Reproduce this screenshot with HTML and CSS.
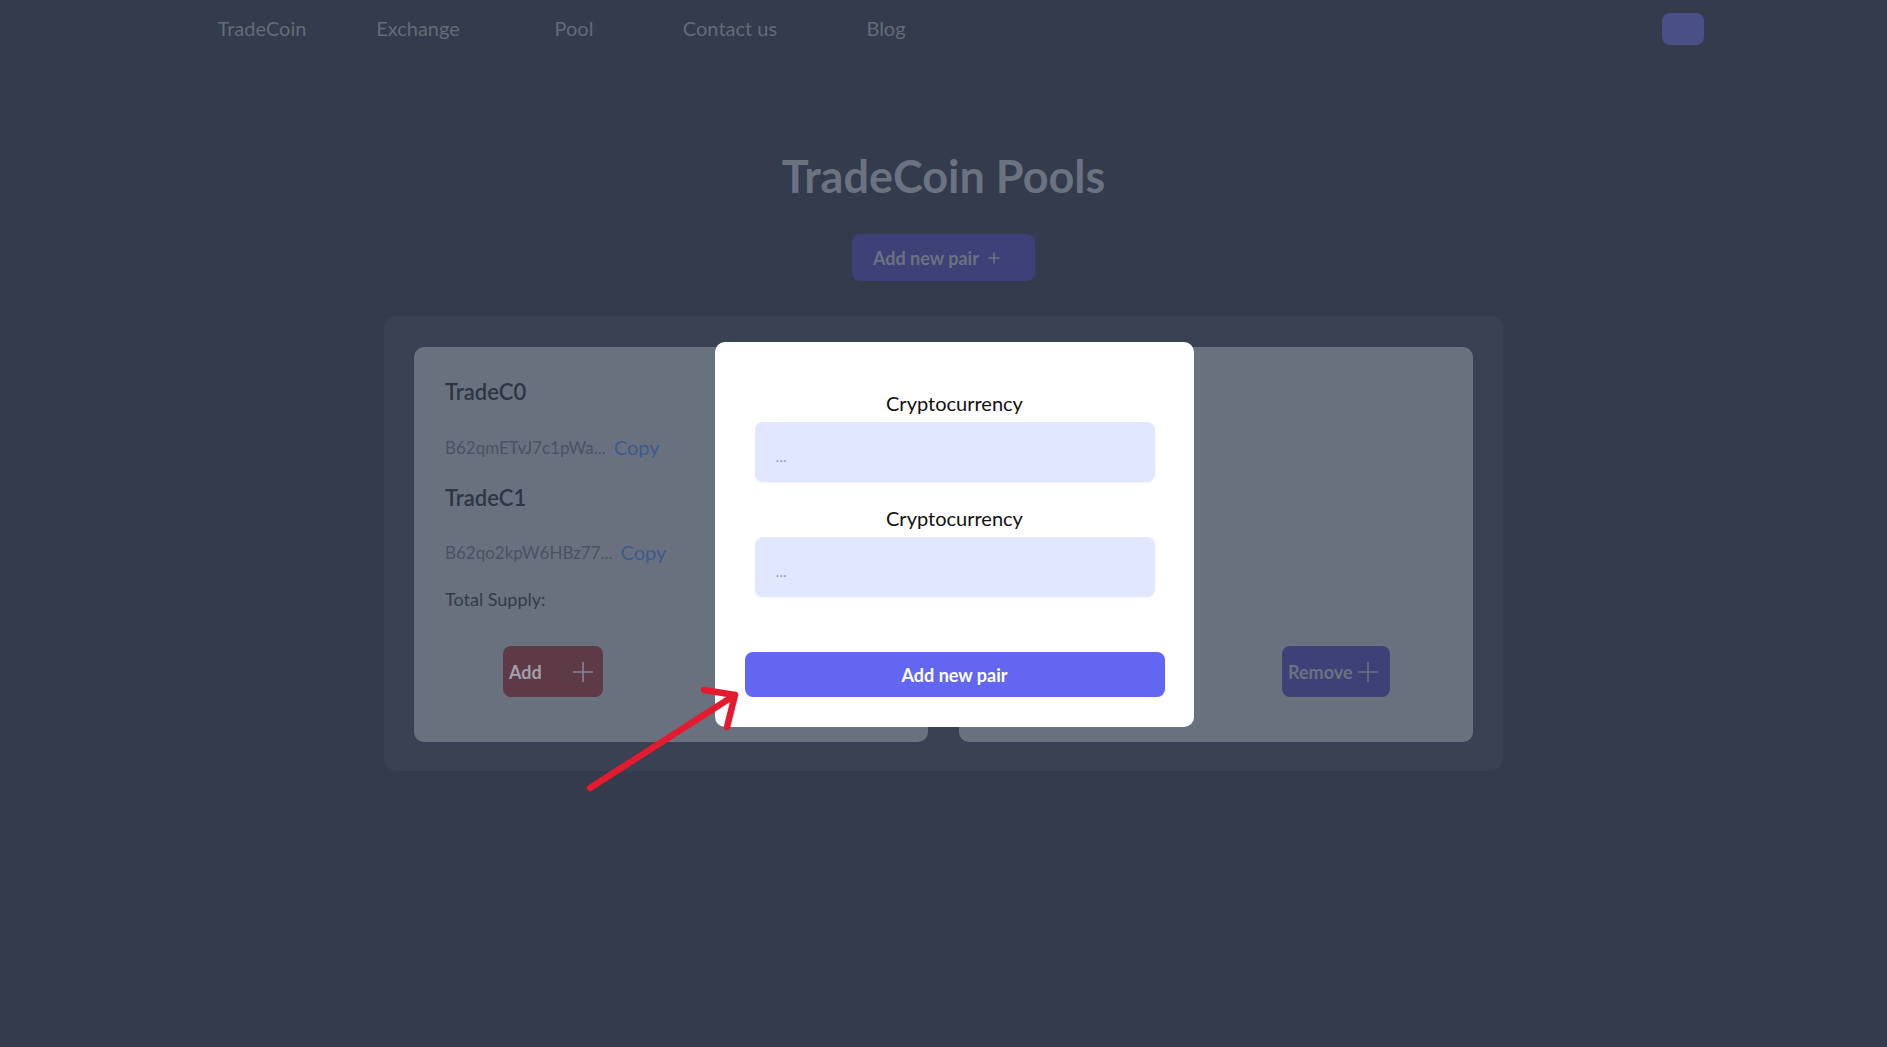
FILE: index.html
```html
<!DOCTYPE html>
<html lang="en">
<head>
<meta charset="utf-8">
<title>TradeCoin Pools</title>
<link rel="stylesheet" href="styles.css">
</head>
<body>
<header class="nav">
  <nav class="nav-links">
    <a class="nav-link">TradeCoin</a>
    <a class="nav-link">Exchange</a>
    <a class="nav-link">Pool</a>
    <a class="nav-link">Contact us</a>
    <a class="nav-link">Blog</a>
  </nav>
  <button class="nav-btn" aria-label="Connect"></button>
</header>

<main class="main">
  <h1 class="title">TradeCoin Pools</h1>
  <button class="add-pair-btn">Add new pair
    <svg class="plus-small" viewBox="0 0 12 12" width="12" height="12"><path d="M6 0.5V11.5M0.5 6H11.5" stroke="currentColor" stroke-width="1.6" fill="none"/></svg>
  </button>

  <section class="pools">
    <article class="card">
      <h2 class="coin">TradeC0</h2>
      <div class="addr-row addr-first"><span class="addr">B62qmETvJ7c1pWa...</span><a class="copy">Copy</a></div>
      <h2 class="coin coin-second">TradeC1</h2>
      <div class="addr-row addr-second"><span class="addr">B62qo2kpW6HBz77...</span><a class="copy">Copy</a></div>
      <p class="supply">Total Supply:</p>
      <div class="btn-row">
        <button class="btn btn-add">Add
          <svg class="plus" viewBox="0 0 22 22" width="22" height="22"><path d="M11 1V21M1 11H21" stroke="currentColor" stroke-width="1.6" fill="none"/></svg>
        </button>
        <button class="btn btn-remove">Remove
          <svg class="plus" viewBox="0 0 22 22" width="22" height="22"><path d="M11 1V21M1 11H21" stroke="currentColor" stroke-width="1.6" fill="none"/></svg>
        </button>
      </div>
    </article>
    <article class="card">
      <div class="btn-row">
        <button class="btn btn-add">Add
          <svg class="plus" viewBox="0 0 22 22" width="22" height="22"><path d="M11 1V21M1 11H21" stroke="currentColor" stroke-width="1.6" fill="none"/></svg>
        </button>
        <button class="btn btn-remove">Remove
          <svg class="plus" viewBox="0 0 22 22" width="22" height="22"><path d="M11 1V21M1 11H21" stroke="currentColor" stroke-width="1.6" fill="none"/></svg>
        </button>
      </div>
    </article>
  </section>
</main>

<div class="modal">
  <label class="modal-label">Cryptocurrency</label>
  <input class="modal-input" type="text" placeholder="...">
  <label class="modal-label modal-label-second">Cryptocurrency</label>
  <input class="modal-input" type="text" placeholder="...">
  <button class="modal-btn">Add new pair</button>
</div>

<svg class="arrow" viewBox="0 0 1887 1047" width="1887" height="1047">
  <path d="M590 788L735 695M704 690L735 695L727 727" stroke="#e41a2e" stroke-width="6.5" stroke-linecap="round" stroke-linejoin="round" fill="none"/>
</svg>
</body>
</html>
```

FILE: styles.css
```css
* {
  box-sizing: border-box;
}

body {
  margin: 0;
  min-height: 100vh;
  background: #333b4d;
  font-family: Lato, "Open Sans", sans-serif;
  color: #6b7280;
}

.nav {
  display: flex;
  align-items: center;
  height: 56px;
  padding: 0 183px 0 184px;
}

.nav-links {
  display: grid;
  grid-template-columns: repeat(5, 156px);
}

.nav-link {
  text-align: center;
  font-size: 20px;
  color: #646b78;
}

.nav-btn {
  margin-left: auto;
  margin-top: 2px;
  width: 42px;
  height: 32px;
  border: none;
  border-radius: 8px;
  background: #4a5086;
}

.main {
  display: flex;
  flex-direction: column;
  align-items: center;
}

.title {
  margin: 94px 0 0;
  font-size: 45px;
  line-height: 53px;
  font-weight: 700;
  color: #6b7280;
}

.add-pair-btn {
  margin-top: 31px;
  width: 183px;
  height: 47px;
  border: none;
  border-radius: 8px;
  background: #3d4177;
  color: #6b7280;
  font-family: inherit;
  font-size: 18px;
  font-weight: 700;
  display: flex;
  align-items: center;
  gap: 9px;
  padding: 0 0 0 21px;
}

.pools {
  margin-top: 35px;
  width: 1119px;
  padding: 31px 30px 29px;
  background: #394152;
  border-radius: 12px;
  display: grid;
  grid-template-columns: 1fr 1fr;
  gap: 31px;
}

.card {
  height: 395px;
  background: #6a717e;
  border-radius: 10px;
  padding: 30px 31px 45px;
  display: flex;
  flex-direction: column;
}

.coin {
  margin: 0;
  font-size: 22px;
  line-height: 30px;
  font-weight: 600;
  color: #2e3543;
}

.coin-second {
  margin-top: 22px;
}

.addr-row {
  display: flex;
  align-items: center;
  height: 28px;
  gap: 8px;
}

.addr-first {
  margin-top: 26px;
}

.addr-second {
  margin-top: 25px;
}

.addr {
  font-size: 17px;
  color: #4a5261;
}

.copy {
  font-size: 20px;
  color: #3c5a90;
}

.supply {
  margin: 21px 0 0;
  font-size: 18px;
  line-height: 24px;
  color: #343b48;
}

.btn-row {
  margin-top: auto;
  display: flex;
  justify-content: space-between;
  padding: 0 52px 0 58px;
}

.btn {
  height: 51px;
  border: none;
  border-radius: 8px;
  font-family: inherit;
  font-size: 18px;
  font-weight: 700;
  display: flex;
  align-items: center;
}

.btn-add {
  width: 100px;
  background: #5e3a47;
  color: #a29fab;
  justify-content: space-between;
  padding: 0 9px 0 6px;
}

.btn-add .plus {
  color: #858593;
}

.btn-remove {
  width: 108px;
  background: #3d4177;
  color: #6b7280;
  gap: 4px;
  padding: 0 0 0 6px;
}

.modal {
  position: fixed;
  left: 715px;
  top: 342px;
  width: 479px;
  height: 385px;
  background: #ffffff;
  border-radius: 10px;
  display: flex;
  flex-direction: column;
  align-items: center;
  padding-top: 49px;
}

.modal-label {
  font-size: 20px;
  line-height: 24px;
  color: #111111;
}

.modal-label-second {
  margin-top: 24px;
}

.modal-input {
  margin-top: 7px;
  width: 400px;
  height: 60px;
  border: none;
  border-radius: 8px;
  background: #e0e7ff;
  padding: 6px 21px 0;
  font-family: inherit;
  font-size: 16px;
  outline: none;
  box-shadow: 0 1px 2px rgba(0, 0, 0, 0.05);
}

.modal-input::placeholder {
  color: #9ca3af;
}

.modal-btn {
  margin-top: 55px;
  width: 420px;
  height: 45px;
  border: none;
  border-radius: 8px;
  background: #6366f1;
  color: #ffffff;
  font-family: inherit;
  font-size: 18px;
  font-weight: 700;
}

.arrow {
  position: absolute;
  left: 0;
  top: 0;
  pointer-events: none;
}
```
